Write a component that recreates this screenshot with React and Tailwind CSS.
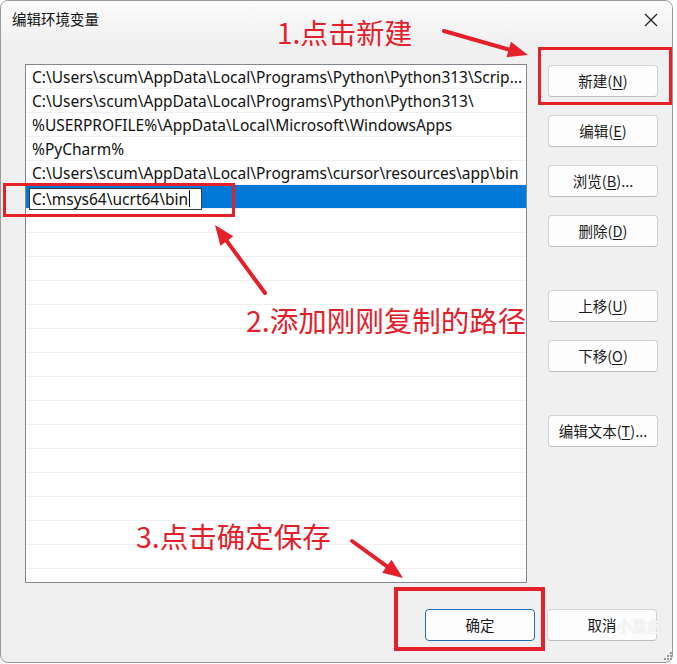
import React from 'react';

const RED = '#e4202b';

const paths = [
  'C:\\Users\\scum\\AppData\\Local\\Programs\\Python\\Python313\\Scrip...',
  'C:\\Users\\scum\\AppData\\Local\\Programs\\Python\\Python313\\',
  '%USERPROFILE%\\AppData\\Local\\Microsoft\\WindowsApps',
  '%PyCharm%',
  'C:\\Users\\scum\\AppData\\Local\\Programs\\cursor\\resources\\app\\bin',
];

function Btn({ label, hot, suffix = '', primary = false, className = '' }) {
  return (
    <button
      className={`w-[110px] h-[32px] rounded-[4px] bg-[#fdfdfd] text-[14.5px] text-[#1a1a1a] border ${
        primary ? 'border-[#1f6fb8]' : 'border-[#d2d2d2] border-b-[#bcbcbc]'
      } ${className}`}
    >
      {label}
      {hot && (
        <>
          (<span className="underline underline-offset-2">{hot}</span>){suffix}
        </>
      )}
    </button>
  );
}

function Arrow({ x1, y1, x2, y2 }) {
  const a = Math.atan2(y2 - y1, x2 - x1);
  const len = 20;
  const w = 8;
  const bx = x2 - len * Math.cos(a);
  const by = y2 - len * Math.sin(a);
  const p1 = `${bx + w * Math.sin(a)},${by - w * Math.cos(a)}`;
  const p2 = `${bx - w * Math.sin(a)},${by + w * Math.cos(a)}`;
  return (
    <g>
      <line x1={x1} y1={y1} x2={bx + 4 * Math.cos(a)} y2={by + 4 * Math.sin(a)} stroke={RED} strokeWidth="4" strokeLinecap="round" />
      <polygon points={`${x2},${y2} ${p1} ${p2}`} fill={RED} />
    </g>
  );
}

export default function App() {
  const emptyRows = Array.from({ length: 16 });
  return (
    <div
      className="relative w-[677px] h-[664px] bg-white overflow-hidden"
      style={{ fontFamily: '"Noto Sans", "Noto Sans CJK SC", sans-serif' }}
    >
      {/* window */}
      <div className="w-[673px] h-[663px] rounded-[8px] border border-[#9a9a9a] bg-[#f0f0f0] flex flex-col overflow-hidden">
        {/* title bar */}
        <div className="h-[40px] shrink-0 flex items-start justify-between pl-[11px] pr-[11px] pt-[7px] bg-gradient-to-b from-[#fbfbfc] to-[#f1f1f2]">
          <span className="text-[14.5px] text-[#111]" style={{ fontFamily: '"Noto Sans CJK SC", sans-serif' }}>
            编辑环境变量
          </span>
          <svg width="16" height="16" viewBox="0 0 16 16" className="mt-[4px] mr-[2px]">
            <path d="M2 2 L14 14 M14 2 L2 14" stroke="#222" strokeWidth="1.3" />
          </svg>
        </div>

        {/* main */}
        <div className="flex pl-[24px] pt-[23px]">
          <div className="w-[502px] h-[519px] bg-white border border-[#828790] overflow-hidden">
            {paths.map((p) => (
              <div key={p} className="h-[24px] border-b border-[#f0f0f0] pl-[6px] pt-[1px] text-[15.5px] leading-[23px] text-[#111] whitespace-nowrap">
                {p}
              </div>
            ))}
            <div className="h-[24px] bg-[#0078d7] flex items-center pl-[3px] border-b border-[#f0f0f0]">
              <div className="w-[173px] h-[22px] mt-[4px] bg-white border border-[#3c3c3c] pl-[2px] text-[15.5px] leading-[20px] text-[#111] flex items-center whitespace-nowrap">
                C:\msys64\ucrt64\bin
                <span className="inline-block w-px h-[17px] bg-black ml-[1px]" />
              </div>
            </div>
            {emptyRows.map((_, i) => (
              <div key={i} className="h-[24px] border-b border-[#f0f0f0]" />
            ))}
          </div>

          <div className="ml-[21px] pt-[1px] flex flex-col" style={{ fontFamily: '"Noto Sans CJK SC", sans-serif' }}>
            <Btn label="新建" hot="N" />
            <Btn label="编辑" hot="E" className="mt-[18px]" />
            <Btn label="浏览" hot="B" suffix="..." className="mt-[18px]" />
            <Btn label="删除" hot="D" className="mt-[18px]" />
            <Btn label="上移" hot="U" className="mt-[43px]" />
            <Btn label="下移" hot="O" className="mt-[18px]" />
            <Btn label="编辑文本" hot="T" suffix="..." className="mt-[43px]" />
          </div>
        </div>

        {/* bottom buttons */}
        <div className="flex justify-end gap-[12px] pr-[15px] pt-[26px]" style={{ fontFamily: '"Noto Sans CJK SC", sans-serif' }}>
          <Btn label="确定" primary />
          <div className="relative">
            <Btn label="取消" />
            <span className="absolute left-[70px] top-[6px] text-[15px] text-white/80 font-bold tracking-tight whitespace-nowrap" style={{ textShadow: '0 0 1px #d0d0d0' }}>
              小黑盒
            </span>
          </div>
        </div>
      </div>

      {/* resize grip */}
      <svg className="absolute right-[4px] bottom-[3px]" width="10" height="10" viewBox="0 0 10 10">
        {[[8, 2], [8, 5], [5, 5], [8, 8], [5, 8], [2, 8]].map(([x, y]) => (
          <rect key={`${x}-${y}`} x={x - 1} y={y - 1} width="2" height="2" fill="#999" />
        ))}
      </svg>

      {/* annotations */}
      <div className="absolute inset-0 pointer-events-none" style={{ fontFamily: '"Noto Sans CJK SC", sans-serif' }}>
        <div className="absolute left-[538px] top-[47px] w-[134px] h-[58px] border-[3px] border-[#e4202b]" />
        <div className="absolute left-[3px] top-[183px] w-[232px] h-[34px] border-[3px] border-[#e4202b]" />
        <div className="absolute left-[394px] top-[587px] w-[151px] h-[64px] border-[4px] border-[#e4202b]" />

        <span className="absolute left-[277px] top-[14px] text-[28px] leading-[36px] text-[#e4202b] whitespace-nowrap">1.点击新建</span>
        <span className="absolute left-[246px] top-[302px] text-[28.5px] leading-[36px] text-[#e4202b] whitespace-nowrap">2.添加刚刚复制的路径</span>
        <span className="absolute left-[136px] top-[518px] text-[28.5px] leading-[36px] text-[#e4202b] whitespace-nowrap">3.点击确定保存</span>

        <svg className="absolute inset-0" width="677" height="664">
          <Arrow x1={444} y1={31} x2={528} y2={55} />
          <Arrow x1={265} y1={293} x2={215} y2={225} />
          <Arrow x1={352} y1={541} x2={403} y2={578} />
        </svg>
      </div>
    </div>
  );
}
